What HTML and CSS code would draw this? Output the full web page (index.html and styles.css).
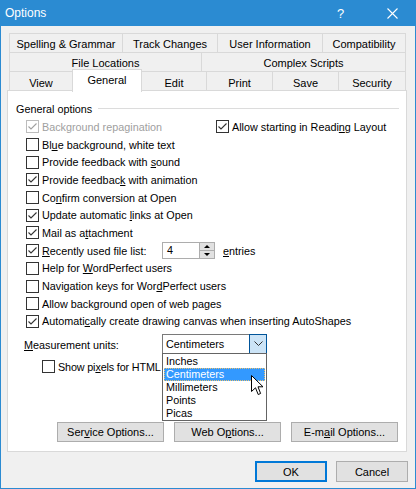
FILE: index.html
```html
<!DOCTYPE html>
<html>
<head>
<meta charset="utf-8">
<link rel="stylesheet" href="styles.css">
</head>
<body>
<div class="window">
  <div class="titlebar">
    <span class="title">Options</span>
    <span class="help">?</span>
    <svg class="close" width="11" height="11" viewBox="0 0 11 11"><path d="M0.5 0.5 L10.5 10.5 M10.5 0.5 L0.5 10.5" stroke="#fff" stroke-width="1.1"/></svg>
  </div>
  <div class="body">
    <div class="tabs">
      <div class="tabrow r1">
        <div class="tab">Spelling &amp; Grammar</div>
        <div class="tab">Track Changes</div>
        <div class="tab">User Information</div>
        <div class="tab last">Compatibility</div>
      </div>
      <div class="tabrow r2">
        <div class="tab">File Locations</div>
        <div class="tab last">Complex Scripts</div>
      </div>
      <div class="tabrow r3">
        <div class="tab">View</div>
        <div class="tab sel">General</div>
        <div class="tab">Edit</div>
        <div class="tab">Print</div>
        <div class="tab">Save</div>
        <div class="tab last">Security</div>
      </div>
    </div>
    <div class="panel">
      <div class="group-head"><span>General options</span><span class="rule"></span></div>
      <div class="rows">
        <div class="row two">
          <label class="item disabled"><span class="cb on dis"><svg viewBox="0 0 11 11"><path d="M1.5 5.5 L4 8 L9.5 2.5"/></svg></span><span class="txt">Background repagination</span></label>
          <label class="item"><span class="cb on"><svg viewBox="0 0 11 11"><path d="M1.5 5.5 L4 8 L9.5 2.5"/></svg></span><span class="txt">Allow starting in Readi<u>n</u>g Layout</span></label>
        </div>
        <div class="row"><label class="item"><span class="cb"></span><span class="txt">Bl<u>u</u>e background, white text</span></label></div>
        <div class="row"><label class="item"><span class="cb"></span><span class="txt">Provide feedback with <u>s</u>ound</span></label></div>
        <div class="row"><label class="item"><span class="cb on"><svg viewBox="0 0 11 11"><path d="M1.5 5.5 L4 8 L9.5 2.5"/></svg></span><span class="txt">Provide feedbac<u>k</u> with animation</span></label></div>
        <div class="row"><label class="item"><span class="cb"></span><span class="txt">Co<u>n</u>firm conversion at Open</span></label></div>
        <div class="row"><label class="item"><span class="cb on"><svg viewBox="0 0 11 11"><path d="M1.5 5.5 L4 8 L9.5 2.5"/></svg></span><span class="txt">Update automatic <u>l</u>inks at Open</span></label></div>
        <div class="row"><label class="item"><span class="cb on"><svg viewBox="0 0 11 11"><path d="M1.5 5.5 L4 8 L9.5 2.5"/></svg></span><span class="txt">Mail as a<u>t</u>tachment</span></label></div>
        <div class="row">
          <label class="item fixed"><span class="cb on"><svg viewBox="0 0 11 11"><path d="M1.5 5.5 L4 8 L9.5 2.5"/></svg></span><span class="txt"><u>R</u>ecently used file list:</span></label>
          <div class="spin"><span class="spin-val">4</span><span class="spin-btns"><span class="sb up"></span><span class="sb down"></span></span></div>
          <span class="entries"><u>e</u>ntries</span>
        </div>
        <div class="row"><label class="item"><span class="cb"></span><span class="txt">Help for <u>W</u>ordPerfect users</span></label></div>
        <div class="row"><label class="item"><span class="cb"></span><span class="txt">Navigation keys for Wor<u>d</u>Perfect users</span></label></div>
        <div class="row"><label class="item"><span class="cb"></span><span class="txt">Allow back<u>g</u>round open of web pages</span></label></div>
        <div class="row"><label class="item"><span class="cb on"><svg viewBox="0 0 11 11"><path d="M1.5 5.5 L4 8 L9.5 2.5"/></svg></span><span class="txt">Automati<u>c</u>ally create drawing canvas when inserting AutoShapes</span></label></div>
      </div>
      <div class="measure">
        <span class="mlabel"><u>M</u>easurement units:</span>
        <div class="combo">
          <span class="combo-val">Centimeters</span>
          <span class="combo-btn"><svg width="9" height="5" viewBox="0 0 9 5"><path d="M0.5 0.5 L4.5 4.5 L8.5 0.5" fill="none" stroke="#333" stroke-width="1"/></svg></span>
          <div class="list">
            <div class="opt">Inches</div>
            <div class="opt hl">Centimeters</div>
            <div class="opt">Millimeters</div>
            <div class="opt">Points</div>
            <div class="opt">Picas</div>
          </div>
          <svg class="cursor" width="13" height="21" viewBox="0 0 13 21"><path d="M0.5 0.5 L0.5 16.5 L4.5 12.8 L7.2 19.5 L9.6 18.5 L7 11.8 L12 11.8 Z" fill="#fff" stroke="#000" stroke-width="1" stroke-linejoin="miter"/></svg>
        </div>
      </div>
      <div class="row pixels"><label class="item"><span class="cb"></span><span class="txt tight">Show pi<u>x</u>els for HTML</span></label></div>
      <div class="btnrow">
        <button class="btn">Ser<u>v</u>ice Options...</button>
        <button class="btn">Web O<u>p</u>tions...</button>
        <button class="btn">E-m<u>a</u>il Options...</button>
      </div>
    </div>
    <div class="footer">
      <button class="btn small ok">OK</button>
      <button class="btn small">Cancel</button>
    </div>
  </div>
</div>
</body>
</html>
```
FILE: styles.css
```css
* { box-sizing: border-box; }
html, body { margin: 0; padding: 0; background: #fff; }
body {
  font-family: "Liberation Sans", Arial, sans-serif;
  font-size: 10.8px;
  color: #000;
}
u { text-decoration: underline; text-underline-offset: 1px; }

.window {
  width: 416px;
  height: 489px;
  border: 1px solid #2b8bd2;
  background: #f0f0f0;
  display: flex;
  flex-direction: column;
  overflow: hidden;
}
.titlebar {
  height: 25px;
  background: #2b8bd2;
  color: #fff;
  display: flex;
  align-items: center;
  padding-left: 4px;
  flex: none;
}
.title { font-size: 12px; flex: 1; margin-top: -1px; }
.help { font-size: 13px; width: 12px; margin-right: 38px; margin-top: -1px; }
.close { margin-right: 17px; margin-top: -1px; }

.body {
  flex: 1;
  padding: 7px 0 0 6px;
  display: flex;
  flex-direction: column;
}

.tabs { margin: 0 2px; width: 397px; font-size: 11px; }
.tabrow {
  display: grid;
  height: 19px;
  border-top: 1px solid #d9d9d9;
}
.r1 { grid-template-columns: 113px 95px 105px 84px; }
.r2 { grid-template-columns: 192px 205px; }
.r3 { grid-template-columns: 63px 70px 64px 66px 66px 68px; }
.tab {
  border-left: 1px solid #d9d9d9;
  display: flex;
  align-items: center;
  justify-content: center;
  white-space: nowrap;
  padding-top: 1px;
}
.tab.last { border-right: 1px solid #d9d9d9; }
.tab.sel {
  background: #fff;
  margin-top: -3px;
  height: 23px;
  border: 1px solid #d9d9d9;
  border-bottom: none;
  position: relative;
  z-index: 2;
  padding-top: 0;
  padding-bottom: 2px;
}
.tab.sel + .tab { border-left: none; }

.panel {
  width: 400px;
  height: 362px;
  background: #fff;
  border: 1px solid #d9d9d9;
  padding: 8px 0 9px 8px;
  display: flex;
  flex-direction: column;
  flex: none;
}
.group-head {
  height: 19px;
  display: flex;
  align-items: center;
}
.group-head .rule {
  flex: 1;
  height: 1px;
  background: #dcdcdc;
  margin: 0 7px 0 6px;
}
.rows { padding-left: 10px; }
.row {
  height: 17.7px;
  display: flex;
  align-items: center;
  white-space: nowrap;
}
.row.two {
  display: grid;
  grid-template-columns: 190px auto;
  align-items: center;
}
.item { display: flex; align-items: center; }
.item.fixed { width: 136px; }
.txt { white-space: pre; }
.txt.tight { letter-spacing: -0.15px; }
.disabled { color: #a0a0a0; }
.cb {
  width: 13px;
  height: 13px;
  border: 1px solid #333;
  background: #fff;
  margin-right: 3px;
  flex: none;
  display: flex;
}
.cb svg { width: 11px; height: 11px; }
.cb svg path { fill: none; stroke: #333; stroke-width: 1.1; }
.cb.dis { border-color: #bcbcbc; }
.cb.dis svg path { stroke: #a0a0a0; }

.spin {
  width: 53px;
  height: 17px;
  border: 1px solid #adadad;
  display: flex;
  background: #fff;
}
.spin-val { flex: 1; padding-left: 4px; line-height: 15px; }
.spin-btns {
  width: 15px;
  display: flex;
  flex-direction: column;
  border-left: 1px solid #adadad;
}
.sb {
  flex: 1;
  background: #e1e1e1;
  display: flex;
  align-items: center;
  justify-content: center;
}
.sb.up { border-bottom: 1px solid #adadad; }
.sb.up::after {
  content: "";
  border-left: 3px solid transparent;
  border-right: 3px solid transparent;
  border-bottom: 3px solid #000;
}
.sb.down::after {
  content: "";
  border-left: 3px solid transparent;
  border-right: 3px solid transparent;
  border-top: 3px solid #000;
}
.entries { margin-left: 8px; }

.measure {
  margin-top: 3.6px;
  height: 20px;
  display: flex;
  align-items: center;
  padding-left: 8px;
  position: relative;
  z-index: 4;
}
.mlabel { width: 138px; padding-top: 2px; }
.combo {
  position: relative;
  width: 105px;
  height: 20px;
  border: 1px solid #7a7a7a;
  display: flex;
  background: #fff;
}
.combo-val { flex: 1; padding-left: 3px; line-height: 18px; }
.combo-btn {
  width: 18px;
  margin: -1px -1px -1px 0;
  background: #cce4f7;
  border: 1px solid #005499;
  display: flex;
  align-items: center;
  justify-content: center;
}
.list {
  position: absolute;
  top: 18px;
  left: -1px;
  width: 105px;
  border: 1px solid #646464;
  background: #fff;
  z-index: 5;
  padding: 1px 1px 0;
}
.opt {
  height: 13px;
  line-height: 13px;
  padding-left: 2px;
}
.opt.hl {
  background: #3399ff;
  color: #fff;
  outline: 1px dotted #e8c070;
  outline-offset: -1px;
}
.cursor {
  position: absolute;
  left: 88px;
  top: 40px;
  z-index: 6;
}

.row.pixels { margin-top: 4px; padding-left: 26px; }

.btnrow {
  margin-top: auto;
  display: flex;
  gap: 10px;
  padding-left: 41px;
}
.btn {
  font-family: "Liberation Sans", Arial, sans-serif;
  font-size: 11px;
  color: #000;
  width: 107px;
  height: 20px;
  background: #e1e1e1;
  border: 1px solid #adadad;
  padding: 0;
  margin: 0;
}
.footer {
  display: flex;
  justify-content: flex-end;
  gap: 9px;
  padding-right: 7px;
  margin-top: 9px;
}
.btn.small { width: 72px; height: 21px; }
.btn.ok { border: 2px solid #0078d7; }
```
